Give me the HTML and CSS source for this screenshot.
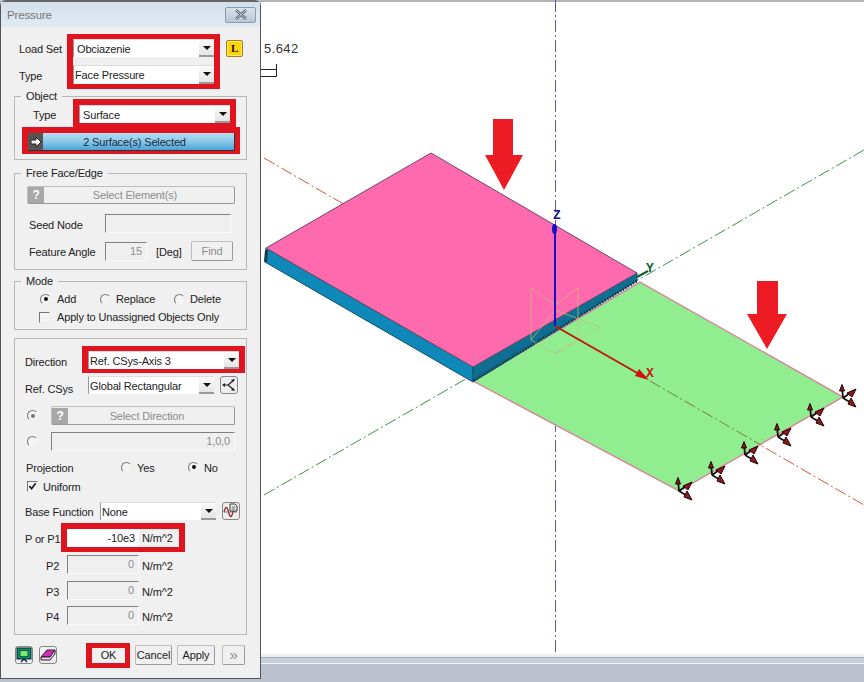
FILE: index.html
```html
<!DOCTYPE html>
<html lang="en">
<head>
  <meta charset="UTF-8">
  <meta name="viewport" content="width=device-width, initial-scale=1.0">
  <title>Pressure</title>
  <link rel="stylesheet" href="styles.css">
</head>
<body>
<div class="page">

  <!-- Pressure dialog -->
  <div class="dialog">
    <div class="titlebar">
      <span class="title">Pressure</span>
      <span class="close"><svg width="14" height="11" viewBox="0 0 14 11"><path d="M2 1l10 9M12 1L2 10" stroke="#4a5560" stroke-width="2.4" fill="none"/><path d="M2 1l10 9M12 1L2 10" stroke="#e8eef4" stroke-width="1" fill="none"/></svg></span>
    </div>

    <div class="top">
      <div class="top-labels">
        <div class="lbl top-l1">Load Set</div>
        <div class="lbl top-l2">Type</div>
      </div>
      <div class="red red-top">
        <div class="combo w141 h18"><span class="pad-2">Obciazenie</span><i class="arrow"></i></div>
        <div class="combo w141 h19 gap9"><span>Face Pressure</span><i class="arrow"></i></div>
      </div>
      <div class="l-btn">L</div>
    </div>

    <div class="group obj">
      <span class="legend">Object</span>
      <div class="row">
        <span class="lbl w-type">Type</span>
        <div class="red red-type">
          <div class="combo w151 h18"><span class="pad-2">Surface</span><i class="arrow"></i></div>
        </div>
      </div>
      <div class="red red-sel">
        <div class="btn-blue">
          <span class="arrow-ico"><svg width="14" height="14" viewBox="0 0 14 14"><path d="M2 5h5V2l5 5-5 5V9H2z" fill="#fff" stroke="#222" stroke-width="1"/></svg></span>
          <span class="btn-blue-text">2 Surface(s) Selected</span>
        </div>
      </div>
    </div>

    <div class="group free">
      <span class="legend">Free Face/Edge</span>
      <div class="btn off sel-el"><span class="q">?</span><span class="btn-text">Select Element(s)</span></div>
      <div class="row seed">
        <span class="lbl w-seed">Seed Node</span>
        <div class="field w126"></div>
      </div>
      <div class="row feat">
        <span class="lbl w-seed">Feature Angle</span>
        <div class="field w42">15</div>
        <span class="lbl deg">[Deg]</span>
        <div class="btn off find">Find</div>
      </div>
    </div>

    <div class="group mode">
      <span class="legend">Mode</span>
      <div class="row opt-row">
        <i class="radio on add-r"></i><span class="lbl opt-add">Add</span>
        <i class="radio"></i><span class="lbl opt-rep">Replace</span>
        <i class="radio"></i><span class="lbl">Delete</span>
      </div>
      <div class="row opt-row apply">
        <i class="check"></i><span class="lbl">Apply to Unassigned Objects Only</span>
      </div>
    </div>

    <div class="group load">
      <div class="row">
        <span class="lbl w-dir">Direction</span>
        <div class="red red-dir">
          <div class="combo w151 h18"><span>Ref. CSys-Axis 3</span><i class="arrow"></i></div>
        </div>
      </div>
      <div class="row refcsys">
        <span class="lbl w-ref">Ref. CSys</span>
        <div class="combo w126 h18"><span>Global Rectangular</span><i class="arrow"></i></div>
        <div class="ico-btn ml6">
          <svg width="16" height="16" viewBox="0 0 16 16"><path d="M7 8L2 8M7 8l6-5M7 8l6 5" fill="none" stroke="#222" stroke-width="1.2"/><path d="M1 8l3-2v4zM14 2l-4 .8 2 2.400zM14 14l-4-.8 2-2.400z" fill="#222"/></svg>
        </div>
      </div>
      <div class="row dir-sel">
        <i class="radio on dim"></i>
        <div class="btn off w184"><span class="q">?</span><span class="btn-text">Select Direction</span></div>
      </div>
      <div class="row dir-vec">
        <i class="radio dim"></i>
        <div class="field w184">1,0,0</div>
      </div>
      <div class="row proj">
        <span class="lbl w-proj">Projection</span>
        <i class="radio"></i><span class="lbl opt-yes">Yes</span>
        <i class="radio on"></i><span class="lbl">No</span>
      </div>
      <div class="row uni">
        <i class="check checked"><svg width="10" height="10" viewBox="0 0 10 10"><path d="M1.5 5l2.500 3 4.500-6" fill="none" stroke="#111" stroke-width="1.8"/></svg></i>
        <span class="lbl">Uniform</span>
      </div>
      <div class="row base">
        <span class="lbl w-base">Base Function</span>
        <div class="combo w116 h18"><span>None</span><i class="arrow"></i></div>
        <div class="ico-btn ml6">
          <svg width="16" height="16" viewBox="0 0 16 16"><path d="M1 9c1.500-6 3-6 4.500 0s3 6 4.500 0 2-3 4-2" fill="none" stroke="#a02030" stroke-width="1.300"/><path d="M1 9h13" stroke="#666" stroke-width=".8"/><path d="M7 1h5l2 2v5H7z" fill="#fff" stroke="#333"/><path d="M8.500 4h4M8.500 6h4" stroke="#333" stroke-width=".8"/></svg>
        </div>
      </div>
      <div class="row p1-row">
        <span class="lbl w-p1">P or P1</span>
        <div class="red red-p1">
          <div class="field-live">-10e3</div>
          <span class="lbl unit">N/m^2</span>
        </div>
      </div>
      <div class="row pn first"><span class="lbl w-pn">P2</span><div class="field w72">0</div><span class="lbl unit">N/m^2</span></div>
      <div class="row pn"><span class="lbl w-pn">P3</span><div class="field w72">0</div><span class="lbl unit">N/m^2</span></div>
      <div class="row pn last"><span class="lbl w-pn">P4</span><div class="field w72">0</div><span class="lbl unit">N/m^2</span></div>
    </div>

    <div class="footer">
      <div class="ico-btn">
        <svg width="16" height="16" viewBox="0 0 16 16"><rect x="1" y="1" width="14" height="11" fill="#0c8a70" stroke="#123"/><rect x="4" y="3.500" width="8" height="6" fill="#7ee860" stroke="#064"/><path d="M5 15l3-3 3 3" fill="none" stroke="#123" stroke-width="1.300"/></svg>
      </div>
      <div class="ico-btn ml6">
        <svg width="16" height="16" viewBox="0 0 16 16"><path d="M1 10l6-7h8l-5 7z" fill="#d02cc0" stroke="#222"/><path d="M1 10v3h9l5-6V3l-5 7z" fill="#f6d0ee" stroke="#222"/></svg>
      </div>
      <div class="red red-ok"><span>OK</span></div>
      <div class="btn cmd w37">Cancel</div>
      <div class="btn cmd w38">Apply</div>
      <div class="btn off cmd w23 more">&raquo;</div>
    </div>
  </div>

  <!-- model view -->
  <div class="view">
    <svg class="canvas" width="603" height="654" viewBox="261 0 603 654">
      <defs>
        <g id="support">
          <path d="M0 0L-1 -11M0 0L10 -7M0 0L10 6" stroke="#111" stroke-width="1.800" fill="none"/>
          <path d="M-3.500 -7L-1 -13.500L1.500 -7zM4 -5L13 -9L9 -1zM5 6L13 9L8 0z" fill="#8a1a24" stroke="#200" stroke-width="1"/>
        </g>
      </defs>

      <line x1="261" y1="1" x2="864" y2="1" class="frame"/>

      <line x1="555.500" y1="0" x2="555.500" y2="655" class="axis-v"/>
      <line x1="264" y1="158" x2="864" y2="505" class="axis-x"/>
      <line x1="264" y1="495" x2="864" y2="150" class="axis-y"/>

      <text x="264" y="53" class="dim">5.642</text>
      <path d="M261 69.500H276.500M261 76.500H276.500V64" class="dim-line"/>

      <polygon points="473,381 640,282 843,397 679,491" class="face-green"/>
      <line x1="650" y1="381" x2="761" y2="445" class="axis-on-green"/>
      <polygon points="266,248 473,367 473,382 265,262" class="side-left"/>
      <polygon points="473,367 637,273 637,281 473,382" class="side-right"/>
      <line x1="474" y1="380" x2="637" y2="281" class="side-hatch"/>
      <polygon points="431,153 637,273 473,367 266,248" class="face-pink"/>
      <path d="M265 250l3 0-1 12h-3z" fill="#1a3a4a"/>

      <path d="M531 288L555 305L578 288V340L555 354L531 340zM531 340L555 310L600 327L555 354" class="csys-box"/>

      <line x1="555" y1="326" x2="555" y2="228" class="z-arrow"/>
      <ellipse cx="554.500" cy="229" rx="2.500" ry="5" fill="#1010c8"/>
      <text x="553" y="219" class="z-label">Z</text>
      <line x1="555" y1="326" x2="646" y2="378" class="x-arrow"/>
      <polygon points="649,380 635,376 639,369" fill="#d01010"/>
      <text x="646" y="377" class="x-label">X</text>
      <line x1="637" y1="277" x2="648" y2="271" class="y-arrow"/>
      <text x="646" y="272" class="y-label">Y</text>

      <use href="#support" x="679" y="491"/>
      <use href="#support" x="712" y="475"/>
      <use href="#support" x="745" y="455"/>
      <use href="#support" x="778" y="437"/>
      <use href="#support" x="811" y="417"/>
      <use href="#support" x="843" y="398"/>

      <polygon points="493,119 513,119 513,155 523,155 504,190 485,155 493,155" class="load-arrow"/>
      <polygon points="757,281 778,281 778,314 787,314 767,349 747,314 757,314" class="load-arrow"/>
    </svg>
    <div class="status-gap"></div>
    <div class="status-band"></div>
  </div>

</div>
</body>
</html>
```

FILE: styles.css
```css
html, body {
  margin: 0;
  padding: 0;
}

body {
  background-color: #bbc2cd;
  font-family: "Liberation Sans", Arial, sans-serif;
  font-size: 11px;
  letter-spacing: -0.15px;
  color: #222;
}

.page {
  display: flex;
  width: 864px;
  height: 682px;
  overflow: hidden;
}

/* dialog */
.dialog {
  box-sizing: border-box;
  width: 261px;
  height: 679px;
  flex: none;
  background-color: #f0f0f0;
  border: 1px solid #555;
  border-top: 2px solid #666;
  border-radius: 6px 6px 0 0;
}

.titlebar {
  display: flex;
  align-items: center;
  justify-content: space-between;
  height: 25px;
  padding: 0 4px 0 6px;
  background: linear-gradient(#d3dfea, #e2eaf2);
}

.title {
  color: #777;
  font-size: 11.5px;
}

.close {
  display: flex;
  align-items: center;
  justify-content: center;
  box-sizing: border-box;
  width: 31px;
  height: 16px;
  background: linear-gradient(#d8e2ec, #b9c7d6);
  border: 1px solid #8a9aab;
  border-radius: 2px;
}

.lbl {
  white-space: nowrap;
  color: #222;
}

.row {
  display: flex;
  align-items: center;
}

.row > .lbl {
  padding-top: 3px;
}

/* red highlight boxes */
.red {
  box-sizing: border-box;
  border-style: solid;
  border-color: #e0141e;
  border-width: 5px 6px;
  flex: none;
}

.top {
  display: flex;
  align-items: flex-start;
  margin: 7px 0 0 18px;
}

.top-labels {
  width: 48px;
  flex: none;
}

.top-l1 {
  margin-top: 9px;
}

.top-l2 {
  margin-top: 15px;
}

.red-top {
  width: 153px;
  height: 55px;
}

.gap9 {
  margin-top: 8px;
}

.l-btn {
  box-sizing: border-box;
  width: 17px;
  height: 17px;
  margin: 6px 0 0 6px;
  background-color: #ffd400;
  border: 1px solid #a08020;
  border-radius: 2px;
  box-shadow: inset 0 0 0 1px #ffe870;
  font-family: "Liberation Serif", serif;
  font-weight: bold;
  font-size: 11px;
  line-height: 14px;
  text-align: center;
  color: #111;
}

/* combos */
.combo {
  box-sizing: border-box;
  display: flex;
  align-items: center;
  justify-content: space-between;
  background-color: #fff;
  border-left: 1px solid #999;
  border-top: 1px solid #ddd;
  padding-left: 1px;
  flex: none;
}

.pad-2 {
  padding-left: 2px;
}

.w141 { width: 141px; }
.w151 { width: 151px; }
.w126 { width: 126px; }
.w116 { width: 116px; }
.h18 { height: 18px; }
.h19 { height: 19px; }

.arrow {
  display: flex;
  align-items: center;
  justify-content: center;
  width: 15px;
  height: 100%;
  background: linear-gradient(#fafafa, #e4e4e4);
  border-bottom: 2px solid #999;
  box-sizing: border-box;
}

.arrow::before {
  content: "";
  border-left: 4px solid transparent;
  border-right: 4px solid transparent;
  border-top: 4px solid #111;
}

/* group boxes */
.group {
  position: relative;
  box-sizing: border-box;
  width: 233px;
  margin-left: 13px;
  border: 1px solid #b8b8b8;
}

.legend {
  position: absolute;
  top: -8px;
  left: 6px;
  padding: 0 5px;
  background-color: #f0f0f0;
  line-height: 14px;
}

.obj {
  margin-top: 7px;
  padding: 2px 0 5px 7px;
}

.w-type {
  width: 40px;
  margin-left: 11px;
}

.red-type {
  width: 163px;
  height: 28px;
  border-width: 6px 6px 4px;
}

.red-sel {
  width: 218px;
  height: 27px;
  border-width: 6px 5px 4px 6px;
}

.btn-blue {
  display: flex;
  align-items: center;
  height: 17px;
  background: linear-gradient(#b5def2, #8fcbea 45%, #4aa3d6);
  border-right: 1px solid #333;
  border-bottom: 1px solid #333;
}

.arrow-ico {
  display: flex;
  align-items: center;
  justify-content: center;
  width: 15px;
  height: 17px;
  background-color: #555;
}

.btn-blue-text {
  flex: 1;
  text-align: center;
  color: #1a2a40;
  padding-right: 8px;
}

.btn {
  box-sizing: border-box;
  display: flex;
  align-items: center;
  justify-content: center;
  background-color: #f0f0f0;
  border: 1px solid #bdbdbd;
  border-right-color: #999;
  border-bottom-color: #999;
  border-radius: 2px;
  flex: none;
}

.off {
  color: #8c8c8c;
}

.q {
  width: 16px;
  height: 16px;
  background-color: #a8a8a8;
  color: #fff;
  font-weight: bold;
  font-size: 12px;
  line-height: 16px;
  text-align: center;
  flex: none;
}

.btn-text {
  flex: 1;
  text-align: center;
  padding-right: 8px;
}

.free {
  margin-top: 13px;
  padding: 12px 0 8px 12px;
}

.sel-el {
  width: 208px;
  height: 18px;
}

.seed {
  margin-top: 10px;
}

.w-seed {
  width: 76px;
  margin-left: 2px;
}

.feat {
  margin-top: 8px;
}

.row.feat > .lbl {
  padding-top: 2px;
}

.field {
  box-sizing: border-box;
  height: 19px;
  padding-right: 4px;
  background-color: #efefef;
  border-style: solid;
  border-width: 1px;
  border-color: #808080 #fafafa #fafafa #808080;
  color: #8c8c8c;
  line-height: 17px;
  text-align: right;
  flex: none;
}

.w42 { width: 42px; }
.w72 { width: 72px; }
.w184 { width: 184px; }

.deg {
  margin-left: 9px;
  width: 35px;
}

.find {
  width: 42px;
  height: 20px;
}

.mode {
  margin-top: 11px;
  padding: 10px 0 5px 0;
}

.opt-row {
  height: 14px;
  padding-left: 25px;
}

.row.opt-row > .lbl {
  padding-top: 0;
}

.radio {
  box-sizing: border-box;
  display: flex;
  align-items: center;
  justify-content: center;
  width: 11px;
  height: 11px;
  margin-right: 5px;
  background-color: #f4f4f4;
  border: 1px solid;
  border-color: #777 #eee #eee #777;
  border-radius: 50%;
  flex: none;
}

.add-r {
  margin-right: 6px;
}

.radio.on::before {
  content: "";
  width: 4px;
  height: 4px;
  background-color: #111;
  border-radius: 50%;
}

.radio.dim::before {
  background-color: #777;
}

.radio.dim {
  margin-right: 13px;
}

.opt-add {
  width: 43px;
}

.opt-rep {
  width: 58px;
}

.apply {
  margin-top: 4px;
  padding-left: 24px;
}

.check {
  box-sizing: border-box;
  display: flex;
  align-items: center;
  justify-content: center;
  width: 11px;
  height: 11px;
  margin-right: 7px;
  background-color: #f4f4f4;
  border: 1px solid;
  border-color: #777 #eee #eee #777;
  flex: none;
}

.load {
  margin-top: 8px;
  height: 297px;
  padding: 7px 0 0 10px;
}

.w-dir {
  width: 57px;
}

.row > .w-dir {
  padding-top: 4px;
}

.red-dir {
  width: 163px;
  height: 27px;
  border-width: 5px 6px 4px;
}

.refcsys {
  margin-top: 3px;
  height: 18px;
}

.w-ref {
  width: 63px;
}

.row > .w-ref {
  padding-top: 0;
  align-self: flex-end;
  margin-bottom: -2px;
  line-height: 14px;
}

.ico-btn {
  box-sizing: border-box;
  display: flex;
  align-items: center;
  justify-content: center;
  width: 18px;
  height: 18px;
  background-color: #eee;
  border: 1px solid #888;
  border-radius: 3px;
  flex: none;
}

.ml6 {
  margin-left: 6px;
}

.dir-sel {
  margin-top: 12px;
  padding-left: 2px;
}

.dir-sel .btn {
  height: 19px;
}

.dir-vec {
  margin-top: 7px;
  padding-left: 2px;
}

.proj {
  height: 14px;
  margin-top: 9px;
  padding-left: 1px;
}

.row.proj > .lbl, .row.uni > .lbl, .row.base > .lbl {
  padding-top: 2px;
}

.w-proj {
  width: 95px;
}

.opt-yes {
  width: 51px;
}

.uni {
  height: 14px;
  margin-top: 5px;
  padding-left: 2px;
}

.uni .check {
  margin-right: 5px;
}

.base {
  margin-top: 9px;
}

.w-base {
  width: 75px;
}

.p1-row {
  margin-top: 3px;
}

.w-p1 {
  width: 36px;
}

.red-p1 {
  display: flex;
  align-items: center;
  width: 124px;
  height: 29px;
  border-width: 6px 6px 5px;
}

.field-live {
  box-sizing: border-box;
  width: 72px;
  height: 18px;
  padding-right: 4px;
  background-color: #fff;
  line-height: 18px;
  text-align: right;
  flex: none;
}

.unit {
  margin-left: 3px;
}

.pn {
  margin-top: 7px;
}

.pn.first {
  margin-top: 3px;
}

.pn.last {
  margin-top: 6px;
}

.row.pn > .lbl {
  padding-top: 2px;
}

.w-pn {
  width: 42px;
  padding-left: 21px;
  box-sizing: border-box;
}

/* footer buttons */
.footer {
  display: flex;
  align-items: center;
  height: 24px;
  margin-top: 8px;
  padding-left: 14px;
}

.red-ok {
  display: flex;
  align-items: center;
  justify-content: center;
  box-sizing: border-box;
  width: 44px;
  height: 25px;
  margin-left: 29px;
  border-width: 5px 5px 5px 6px;
  background-color: #f0f0f0;
}

.cmd {
  height: 20px;
  margin-left: 5px;
}

.w37 { width: 37px; }
.w38 { width: 38px; }

.w23 {
  width: 23px;
  margin-left: 7px;
}

.more {
  font-size: 15px;
  line-height: 14px;
}

/* model view */
.view {
  flex: 1;
  display: flex;
  flex-direction: column;
}

.canvas {
  display: block;
  background-color: #fff;
}

.status-gap {
  height: 3px;
  background-color: #eef0f3;
}

.status-band {
  height: 5px;
  background-color: #c9cfd9;
  border-top: 1px solid #a3abb8;
  border-bottom: 1px solid #f4f6f8;
}

.frame {
  stroke: #9a9a9a;
  stroke-width: 1.5;
}

.axis-v {
  stroke: #5a5aa8;
  stroke-width: 1;
  stroke-dasharray: 12 3 2 3;
}

.axis-x {
  stroke: #d0563a;
  stroke-width: 1;
  stroke-dasharray: 12 3 2 3;
}

.axis-y {
  stroke: #3f8f4a;
  stroke-width: 1;
  stroke-dasharray: 12 3 2 3;
}

.axis-on-green {
  stroke: #7f7a3c;
  stroke-width: 1;
  stroke-dasharray: 12 3 2 3;
}

.dim {
  font-family: "Liberation Sans", Arial, sans-serif;
  font-size: 13px;
  letter-spacing: 0.4px;
  fill: #333;
}

.dim-line {
  fill: none;
  stroke: #222;
  stroke-width: 1;
}

.face-pink {
  fill: #ff69ae;
  stroke: #6a4a66;
  stroke-width: 1;
}

.face-green {
  fill: #90ee90;
  stroke: #d88a9c;
  stroke-width: 1.500;
}

.side-left {
  fill: #0d88b8;
  stroke: #14506a;
  stroke-width: 1;
}

.side-right {
  fill: #0f6f92;
  stroke: #14506a;
  stroke-width: 1;
}

.side-hatch {
  stroke: #103040;
  stroke-width: 3;
  stroke-dasharray: 1 2;
}

.csys-box {
  fill: none;
  stroke: #c8c078;
  stroke-width: 1;
  opacity: 0.7;
}

.z-arrow {
  stroke: #1010c8;
  stroke-width: 2;
}

.x-arrow {
  stroke: #c01810;
  stroke-width: 2;
}

.y-arrow {
  stroke: #106030;
  stroke-width: 2;
}

.z-label, .x-label, .y-label {
  font-family: "Liberation Mono", monospace;
  font-size: 13px;
  font-weight: bold;
}

.z-label { fill: #101090; }
.x-label { fill: #d01010; }
.y-label { fill: #106030; }

.load-arrow {
  fill: #ed1c24;
}
```
